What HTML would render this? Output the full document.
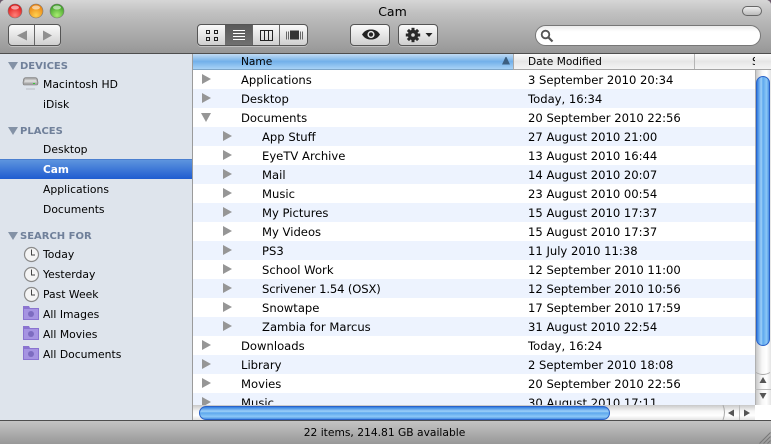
<!DOCTYPE html>
<html><head><meta charset="utf-8"><style>
html,body{margin:0;padding:0;background:#6a5a6a}
body{width:771px;height:444px;overflow:hidden;position:relative;font-family:"DejaVu Sans","Liberation Sans",sans-serif;font-size:11.6px;color:#000}
div,svg{position:absolute}
#win{left:0;top:0;width:771px;height:444px;overflow:hidden;border-radius:5px 5px 0 0;background:#fff}
#tb{left:0;top:0;width:771px;height:53px;background:linear-gradient(#d6d6d6,#c0c0c0 25%,#979797)}
#tbl{left:0;top:53px;width:771px;height:1px;background:#4e4e4e}
.btn{height:22px;top:24px;box-sizing:border-box;border:1px solid #555;border-radius:4px;background:linear-gradient(#fafafa,#e6e6e6 50%,#cfcfcf);box-shadow:0 1px 0 rgba(255,255,255,.35)}
.sep{top:25px;width:1px;height:20px;background:#666}
#side{left:0;top:54px;width:192px;height:366px;background:#dee4ec;border-right:1px solid #9b9b9b}
.sh{left:20px;height:14px;line-height:14px;font-weight:bold;font-size:10px;color:#70809a;letter-spacing:0;white-space:nowrap}
.si{left:43px;height:16px;line-height:16px;font-size:10.8px;white-space:nowrap}
.r{left:193px;width:578px;height:19px;line-height:19px;white-space:nowrap;overflow:hidden}
.r.b{background:#edf3fe}
.n{left:48px;top:1px}.d{left:335px;top:1px}
.c .n{left:69px}
.t{left:9px;top:4px;width:0;height:0;border-left:9px solid #969696;border-top:5px solid transparent;border-bottom:5px solid transparent}
.c .t{left:30px}
.o{left:8px;top:5px;border-top:9px solid #969696;border-left:5px solid transparent;border-right:5px solid transparent;border-bottom:0}
.tri{left:8px;width:0;height:0;border-top:8px solid #8492a6;border-left:5px solid transparent;border-right:5px solid transparent}
#st{left:0;top:421px;width:771px;height:23px;background:linear-gradient(#c4c4c4,#989898);text-align:center;line-height:23px;font-size:10.7px}
#stl{left:0;top:420px;width:771px;height:1px;background:#4e4e4e}
</style></head><body>
<div id="win">
<div id="tb"></div><div id="tbl"></div>

<svg style="left:7px;top:3px" width="60" height="16">
<defs>
<radialGradient id="rd" cx=".5" cy=".8" r=".7"><stop offset="0" stop-color="#ff8078"/><stop offset="1" stop-color="#e01818"/></radialGradient>
<radialGradient id="yl" cx=".5" cy=".8" r=".7"><stop offset="0" stop-color="#ffd050"/><stop offset="1" stop-color="#ea8410"/></radialGradient>
<radialGradient id="gr" cx=".5" cy=".8" r=".7"><stop offset="0" stop-color="#a8ec70"/><stop offset="1" stop-color="#3fa028"/></radialGradient>
</defs>
<circle cx="8" cy="8" r="7" fill="url(#rd)" stroke="#777" stroke-width=".6"/>
<circle cx="29" cy="8" r="7" fill="url(#yl)" stroke="#777" stroke-width=".6"/>
<circle cx="50" cy="8" r="7" fill="url(#gr)" stroke="#777" stroke-width=".6"/>
<ellipse cx="8" cy="4.500" rx="4" ry="2" fill="#fff" opacity=".55"/>
<ellipse cx="29" cy="4.500" rx="4" ry="2" fill="#fff" opacity=".55"/>
<ellipse cx="50" cy="4.500" rx="4" ry="2" fill="#fff" opacity=".55"/>
</svg>
<div style="left:7px;top:3px;width:771px;text-align:center;font-size:12.5px;line-height:17px">Cam</div>
<div style="left:742px;top:6px;width:20px;height:10px;box-sizing:border-box;border:1px solid #666;border-radius:5px;background:linear-gradient(#eee,#bbb)"></div>

<div class="btn" style="left:8px;width:53px"></div>
<div class="sep" style="left:34px"></div>
<svg style="left:8px;top:24px" width="53" height="22"><path d="M19 6.500v10l-10-5z" fill="#8f8f8f"/><path d="M35 6.500v10l9-5z" fill="#8f8f8f"/></svg>

<div class="btn" style="left:197px;width:111px"></div>
<div style="left:225px;top:25px;width:27px;height:20px;background:linear-gradient(#5a5a5a,#707070)"></div>
<div class="sep" style="left:252px"></div><div class="sep" style="left:279px"></div>
<svg style="left:197px;top:25px" width="111" height="20" fill="none" stroke="#222">
<rect x="9.500" y="5.500" width="3" height="3"/><rect x="17.500" y="5.500" width="3" height="3"/><rect x="9.500" y="12.500" width="3" height="3"/><rect x="17.500" y="12.500" width="3" height="3"/>
<path d="M36 5.500h12M36 8.500h12M36 11.500h12M36 14.500h12" stroke="#fff"/>
<path d="M63.500 5.500h12v10h-12zM67.500 5.500v10M71.500 5.500v10"/>
<path d="M89.500 6.500v8M91.500 6.500v8" stroke="#666"/><rect x="93" y="5.500" width="9" height="9" fill="#333" stroke="none"/><path d="M103.500 6.500v8M105.500 6.500v8" stroke="#666"/>
</svg>

<div class="btn" style="left:350px;width:40px"></div>
<svg style="left:350px;top:24px" width="40" height="22"><path d="M12 10.500c2.500-3.800 5-5 9-5s6.500 1.200 9 5c-2.500 3.800-5 5-9 5s-6.500-1.200-9-5z" fill="#222"/><circle cx="21" cy="10.500" r="3.600" fill="#e6e6e6"/><circle cx="21" cy="10.500" r="2.100" fill="#222"/></svg>

<div class="btn" style="left:398px;width:40px"></div>
<svg style="left:398px;top:24px" width="40" height="22"><g transform="translate(15 11)" fill="#2a2a2a"><circle r="5.200"/><rect x="-1.500" y="-7.200" width="3" height="14.400"/><rect x="-1.500" y="-7.200" width="3" height="14.400" transform="rotate(45)"/><rect x="-1.500" y="-7.200" width="3" height="14.400" transform="rotate(90)"/><rect x="-1.500" y="-7.200" width="3" height="14.400" transform="rotate(135)"/><circle r="1.800" fill="#ddd"/></g><path d="M27.500 9h7l-3.500 4z" fill="#222"/></svg>

<div style="left:535px;top:25px;width:226px;height:21px;box-sizing:border-box;border:1px solid #777;border-radius:11px;background:linear-gradient(#ececec,#fff 30%)"></div>
<svg style="left:539px;top:28px" width="16" height="16" fill="none" stroke="#555" stroke-width="1.800"><circle cx="6.500" cy="6.500" r="3.800"/><path d="M9.500 9.500l4 4" stroke-width="2.200"/></svg>

<div id="side">
<div class="tri" style="top:8px"></div>
<div class="sh" style="top:6px">DEVICES</div>
<div class="si" style="top:23px">Macintosh HD</div>
<div class="si" style="top:43px">iDisk</div>
<div class="tri" style="top:73px"></div>
<div class="sh" style="top:71px">PLACES</div>
<div class="si" style="top:88px">Desktop</div>
<div style="left:0;top:105px;width:192px;height:20px;background:linear-gradient(#5d94de,#1f5cd0);border-top:1px solid #4a7fd0;box-sizing:border-box"></div>
<div class="si" style="top:108px;color:#fff;font-weight:bold;font-size:10.6px">Cam</div>
<div class="si" style="top:128px">Applications</div>
<div class="si" style="top:148px">Documents</div>
<div class="tri" style="top:178px"></div>
<div class="sh" style="top:176px">SEARCH FOR</div>
<div class="si" style="top:193px">Today</div>
<div class="si" style="top:213px">Yesterday</div>
<div class="si" style="top:233px">Past Week</div>
<div class="si" style="top:253px">All Images</div>
<div class="si" style="top:273px">All Movies</div>
<div class="si" style="top:293px">All Documents</div>
<svg style="left:21px;top:21px" width="20" height="20"><path d="M2.500 4.500q.5-2 3-2h8q2.500 0 3 2l.5 3q0 2-1 2.500h-13q-1-.5-1-2.500z" fill="#a8a8a8" stroke="#777" stroke-width=".6"/><path d="M4 4.500h11l1 3H3z" fill="#d8d8d8"/><rect x="12" y="8" width="2" height="1" fill="#3c3"/><rect x="5" y="13" width="9" height="2" fill="#cbd0d8"/></svg>
<svg style="left:22.500px;top:192px" width="18" height="18"><circle cx="8.500" cy="8.500" r="7" fill="#f4f4f4" stroke="#8a8a8a" stroke-width="1.200"/><path d="M8.500 3.500v5.500h3.500" fill="none" stroke="#444"/></svg>
<svg style="left:22.500px;top:212px" width="18" height="18"><circle cx="8.500" cy="8.500" r="7" fill="#f4f4f4" stroke="#8a8a8a" stroke-width="1.200"/><path d="M8.500 3.500v5.500h3.500" fill="none" stroke="#444"/></svg>
<svg style="left:22.500px;top:232px" width="18" height="18"><circle cx="8.500" cy="8.500" r="7" fill="#f4f4f4" stroke="#8a8a8a" stroke-width="1.200"/><path d="M8.500 3.500v5.500h3.500" fill="none" stroke="#444"/></svg>
<svg style="left:23px;top:251px" width="17" height="16"><path d="M0 1h6l1 2h9v12H0z" fill="#8a74d0"/><rect x="1" y="4" width="14" height="10" fill="#a694e2"/><circle cx="8" cy="9" r="3" fill="#7d6cc0"/></svg>
<svg style="left:23px;top:271px" width="17" height="16"><path d="M0 1h6l1 2h9v12H0z" fill="#8a74d0"/><rect x="1" y="4" width="14" height="10" fill="#a694e2"/><circle cx="8" cy="9" r="3" fill="#7d6cc0"/></svg>
<svg style="left:23px;top:291px" width="17" height="16"><path d="M0 1h6l1 2h9v12H0z" fill="#8a74d0"/><rect x="1" y="4" width="14" height="10" fill="#a694e2"/><circle cx="8" cy="9" r="3" fill="#7d6cc0"/></svg>
</div>

<div style="left:193px;top:54px;width:578px;height:16px;background:linear-gradient(#fbfbfb,#e6e6e6 50%,#f4f4f4);border-bottom:1px solid #a5a5a5;box-sizing:border-box"></div>
<div style="left:193px;top:54px;width:320px;height:16px;background:linear-gradient(#c2dcf4,#72b0ea 50%,#a8d2f6);border-bottom:1px solid #7fa6c8;box-sizing:border-box"></div>
<div style="left:513px;top:54px;width:1px;height:15px;background:#a8a8a8"></div>
<div style="left:694px;top:54px;width:1px;height:15px;background:#b5b5b5"></div>
<div style="left:241px;top:55px;line-height:15px;font-size:10.6px">Name</div>
<div style="left:528px;top:55px;line-height:15px;font-size:10.6px">Date Modified</div>
<div style="left:752px;top:55px;width:3px;overflow:hidden;line-height:15px;font-size:10.6px">S</div>
<svg style="left:502px;top:57px" width="10" height="8"><path d="M0 7.500L3.500 0h1L8 7.500z" fill="#3c5f80"/></svg>

<div class="r" style="top:70px"><div class="t"></div><div class="n">Applications</div><div class="d">3 September 2010 20:34</div></div>
<div class="r b" style="top:89px"><div class="t"></div><div class="n">Desktop</div><div class="d">Today, 16:34</div></div>
<div class="r" style="top:108px"><div class="t o"></div><div class="n">Documents</div><div class="d">20 September 2010 22:56</div></div>
<div class="r b c" style="top:127px"><div class="t"></div><div class="n">App Stuff</div><div class="d">27 August 2010 21:00</div></div>
<div class="r c" style="top:146px"><div class="t"></div><div class="n">EyeTV Archive</div><div class="d">13 August 2010 16:44</div></div>
<div class="r b c" style="top:165px"><div class="t"></div><div class="n">Mail</div><div class="d">14 August 2010 20:07</div></div>
<div class="r c" style="top:184px"><div class="t"></div><div class="n">Music</div><div class="d">23 August 2010 00:54</div></div>
<div class="r b c" style="top:203px"><div class="t"></div><div class="n">My Pictures</div><div class="d">15 August 2010 17:37</div></div>
<div class="r c" style="top:222px"><div class="t"></div><div class="n">My Videos</div><div class="d">15 August 2010 17:37</div></div>
<div class="r b c" style="top:241px"><div class="t"></div><div class="n">PS3</div><div class="d">11 July 2010 11:38</div></div>
<div class="r c" style="top:260px"><div class="t"></div><div class="n">School Work</div><div class="d">12 September 2010 11:00</div></div>
<div class="r b c" style="top:279px"><div class="t"></div><div class="n" style="letter-spacing:-.15px">Scrivener 1.54 (OSX)</div><div class="d">12 September 2010 10:56</div></div>
<div class="r c" style="top:298px"><div class="t"></div><div class="n">Snowtape</div><div class="d">17 September 2010 17:59</div></div>
<div class="r b c" style="top:317px"><div class="t"></div><div class="n">Zambia for Marcus</div><div class="d">31 August 2010 22:54</div></div>
<div class="r" style="top:336px"><div class="t"></div><div class="n">Downloads</div><div class="d">Today, 16:24</div></div>
<div class="r b" style="top:355px"><div class="t"></div><div class="n">Library</div><div class="d">2 September 2010 18:08</div></div>
<div class="r" style="top:374px"><div class="t"></div><div class="n">Movies</div><div class="d">20 September 2010 22:56</div></div>
<div class="r b" style="top:393px;height:12px"><div class="t"></div><div class="n">Music</div><div class="d">30 August 2010 17:11</div></div>

<div style="left:755px;top:70px;width:16px;height:335px;background:linear-gradient(90deg,#c8c8c8,#f6f6f6 40%,#fff 70%,#e4e4e4);border-left:1px solid #b0b0b0;box-sizing:border-box"></div>
<div style="left:756px;top:76px;width:14px;height:270px;box-sizing:border-box;border:1px solid #2a62c8;border-radius:7px;background:linear-gradient(90deg,#2f7ce0,#9cd0f8 35%,#5ea8ee 50%,#8cc8f6 80%,#4a90e4)"></div>
<svg style="left:755px;top:369px" width="16" height="36"><path d="M1 3.500q7 4 14 0" stroke="#aaa" fill="none"/><path d="M4.500 14l3.500-6 3.500 6z" fill="#555"/><path d="M4.500 24l3.500 6 3.500-6z" fill="#555"/><path d="M0 20.500h16" stroke="#bbb"/></svg>

<div style="left:193px;top:405px;width:562px;height:15px;background:linear-gradient(#c8c8c8,#f6f6f6 40%,#fff 70%,#e4e4e4)"></div>
<div style="left:199px;top:406px;width:411px;height:14px;box-sizing:border-box;border:1px solid #2a62c8;border-radius:7px;background:linear-gradient(#2f7ce0,#9cd0f8 35%,#5ea8ee 50%,#8cc8f6 80%,#4a90e4)"></div>
<div style="left:755px;top:405px;width:16px;height:15px;background:#fff"></div>
<svg style="left:720px;top:405px" width="36" height="15"><path d="M3 0q3 7 0 15" stroke="#aaa" fill="none"/><path d="M14 4.500l-6 3.500 6 3.500z" fill="#555"/><path d="M19.500 0v15" stroke="#bbb"/><path d="M24 4.500l6 3.500-6 3.500z" fill="#555"/></svg>

<div id="stl"></div>
<div id="st"><span style="position:relative;left:-1px">22 items, 214.81 GB available</span></div>
<svg style="left:755px;top:428px" width="16" height="16" stroke="#777" fill="none"><path d="M4.500 15.500l11-11M8.500 15.500l7-7M12.500 15.500l3-3"/></svg>
</div>
</body></html>
